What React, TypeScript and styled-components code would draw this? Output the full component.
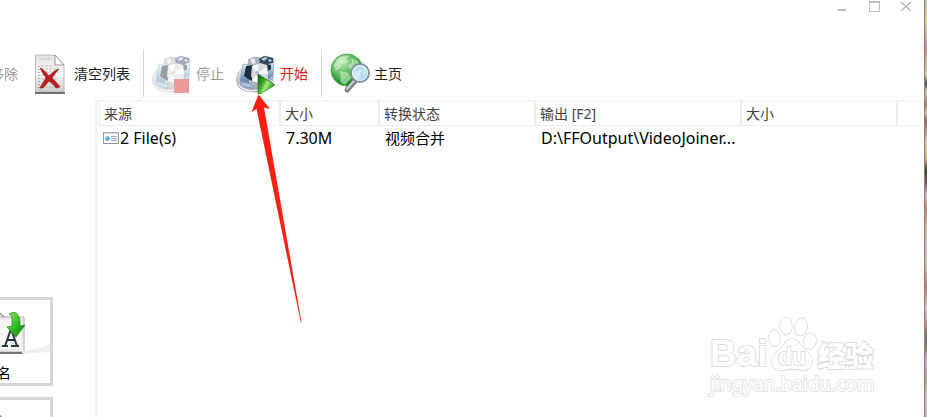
import React from "react";
import styled, { createGlobalStyle } from "styled-components";

const GlobalStyle = createGlobalStyle`
  * { box-sizing: border-box; }
  body {
    margin: 0;
    background: #fff;
    color: #000;
    font-family: "Noto Sans", "Noto Sans CJK SC", sans-serif;
    font-size: 14px;
    line-height: 20px;
  }
  button { font: inherit; background: none; border: 0; padding: 0; color: inherit; }
  svg { display: block; flex: none; }
`;

const Desktop = styled.div`
  position: relative;
  display: flex;
  height: 100vh;
  overflow: hidden;
`;

const AppWindow = styled.main`
  flex: 1;
  min-width: 0;
  display: flex;
  flex-direction: column;
  border-right: 1px solid #85858a;
`;

const WallpaperEdge = styled.div`
  width: 2px;
  background: linear-gradient(
    #c8c0b8 0, #ddd080 5%, #cdbcb4 7%, #c8898a 12%, #d8d0a0 18%, #44483f 20%,
    #d5c5c5 22%, #a07a60 25%, #d4c0c8 27%, #985f5a 29%, #d8cdb4 34%, #d0b070 38%,
    #303c30 41%, #8f5c58 44%, #d8b8c8 47%, #c98070 50%, #d0b090 54%, #cdb4c0 58%,
    #cdbfb8 63%, #c07870 69%, #d6c3c4 74%, #cf8880 78%, #7d7868 80%, #80786c 83%,
    #d4a8c4 86%, #aaa596 91%, #d0b8c0 95%, #c8b0b4 100%
  );
`;

const TitleBar = styled.header`
  display: flex;
  justify-content: flex-end;
  gap: 11px;
  height: 50px;
  padding-right: 8px;
`;

const WindowButton = styled.button`
  width: 21px;
  height: 14px;
  display: flex;
  justify-content: center;
`;

const Toolbar = styled.nav`
  display: flex;
  height: 50px;
  align-items: flex-start;
`;

const Divider = styled.span`
  width: 1px;
  height: 47px;
  background: #d2d2d2;
`;

const ToolButton = styled.button<{ $tone?: "muted" | "active"; $gap?: number; $pad?: string }>`
  display: flex;
  align-items: center;
  height: 48px;
  gap: ${(p) => p.$gap ?? 4}px;
  padding: ${(p) => p.$pad ?? "0"};
  white-space: nowrap;
  color: ${(p) => (p.$tone === "muted" ? "#999" : p.$tone === "active" ? "#cf1d10" : "#222")};
`;

const ClippedTool = styled.div`
  width: 18px;
  display: flex;
  justify-content: flex-end;
  overflow: hidden;
`;

const Body = styled.div`
  flex: 1;
  min-height: 0;
  display: flex;
`;

const Sidebar = styled.aside`
  width: 98px;
  flex: none;
  display: flex;
  flex-direction: column;
  align-items: flex-end;
  gap: 11px;
  padding: 197px 42px 0 0;
  overflow: hidden;
  border-right: 3px solid #f4f4f4;
`;

const Tile = styled.button`
  position: relative;
  flex: none;
  display: flex;
  flex-direction: column;
  align-items: center;
  width: 126px;
  height: 89px;
  padding-top: 9px;
  border: 3px solid #d6d6d6;
  background: #fff;
`;

const Shine = styled.svg`
  position: absolute;
  right: 0;
  top: 42px;
`;

const TileLabel = styled.span`
  margin-top: 6px;
`;

const FilePane = styled.section`
  flex: 1;
  min-width: 0;
  padding: 0 2px 0 1px;
`;

const FileTable = styled.table`
  width: 100%;
  table-layout: fixed;
  border-collapse: separate;
  border-spacing: 0;
`;

const HeadCell = styled.th<{ $width?: number }>`
  width: ${(p) => (p.$width ? `${p.$width}px` : "auto")};
  height: 26px;
  padding: 2px 0 0 4px;
  text-align: left;
  font-weight: 400;
  color: #444;
  white-space: nowrap;
  border: solid #ededed;
  border-width: 1px ${(p) => (p.$width ? 2 : 0)}px 1px 0;
  &:first-child { border-left-width: 1px; }
`;

const Cell = styled.td<{ $cjk?: boolean }>`
  height: 24px;
  padding: 0 0 0 5px;
  font-size: ${(p) => (p.$cjk ? 15 : 16)}px;
  white-space: nowrap;
  &:first-child { padding-left: 4px; }
`;

const FileName = styled.span`
  display: flex;
  align-items: center;
  gap: 1px;
`;

const PointerArrow = styled.svg`
  position: absolute;
  left: 250px;
  top: 94px;
  pointer-events: none;
`;

const Watermark = styled.div`
  position: absolute;
  right: 51px;
  bottom: 21px;
  width: 166px;
  color: #fff;
  -webkit-text-stroke: 2px #dcdcdc;
  paint-order: stroke fill;
  pointer-events: none;
`;

const WatermarkBrand = styled.div`
  display: flex;
  align-items: flex-end;
  height: 56px;
  font: 700 37px/36px "Liberation Sans", sans-serif;
`;

const WatermarkName = styled.span`
  font: 900 28px/34px "Noto Sans CJK SC", sans-serif;
`;

const WatermarkUrl = styled.div`
  font: 400 19px/24px "Noto Sans", sans-serif;
  white-space: nowrap;
  -webkit-text-stroke-color: #e4e4e4;
`;

const ClearIcon = () => (
  <svg width="32" height="42" viewBox="0 0 32 42">
    <defs>
      <linearGradient id="sheet" x1="0" y1="0" x2="0" y2="1">
        <stop offset="0" stopColor="#e4e4e4" />
        <stop offset="0.5" stopColor="#f7f7f7" />
        <stop offset="1" stopColor="#cccccc" />
      </linearGradient>
    </defs>
    <path d="M1.500 2h19l9.500 10v27H1.500z" fill="url(#sheet)" stroke="#b8b8b8" />
    <path d="M1 40h30" stroke="#707070" strokeWidth="2" />
    <path d="M21 2v10h9z" fill="#fff" stroke="#999" />
    <path d="M5 6h12M7 13h11M7 16h16M7 19h18M7 22h15M7 26h17M7 30h15M7 34h17" stroke="#bcbcbc" strokeDasharray="3 1" />
    <path d="M5 13v22" stroke="#777" strokeDasharray="1 2" />
    <path d="M6 15c3 1 6 4 9 8 3-3 6-6 10-7-3 3-5 6-7 9 3 3 5 5 8 9l-4 1c-2-3-4-5-7-7-2 2-4 5-6 7H6c2-4 4-7 6-10-2-3-4-6-6-10z" fill="#c01c1e" stroke="#8f1618" strokeWidth="0.6" />
  </svg>
);

const Camera = ({ faded, children }: { faded?: boolean; children: React.ReactNode }) => (
  <svg width="40" height="40" viewBox="0 0 40 40" opacity={faded ? 0.45 : 1}>
    <defs>
      <linearGradient id="base" x1="0" y1="0" x2="0" y2="1">
        <stop offset="0" stopColor="#e3e5ea" />
        <stop offset="0.6" stopColor="#c3c6cd" />
        <stop offset="1" stopColor="#8e929a" />
      </linearGradient>
      <linearGradient id="metal" x1="0" y1="0" x2="1" y2="1">
        <stop offset="0" stopColor="#9fa5ad" />
        <stop offset="0.5" stopColor="#dfe2e6" />
        <stop offset="1" stopColor="#a2a9b3" />
      </linearGradient>
      <linearGradient id="glass" x1="0" y1="0" x2="0" y2="1">
        <stop offset="0" stopColor="#dcecf8" />
        <stop offset="0.5" stopColor="#91b6d8" />
        <stop offset="1" stopColor="#577fa9" />
      </linearGradient>
      <linearGradient id="play" x1="0" y1="0" x2="1" y2="0.600">
        <stop offset="0" stopColor="#04600a" />
        <stop offset="0.4" stopColor="#3fa82c" />
        <stop offset="0.6" stopColor="#a5ec7b" />
        <stop offset="1" stopColor="#0a8a10" />
      </linearGradient>
    </defs>
    <path d="M0.500 25C1 17 7 12 18 12s19 6 19 14-8 12-19 12S0 34 0.500 25z" fill="url(#base)" stroke="#a9adb5" strokeWidth="0.6" />
    <path d="M3 31c5 6 13 7 22 4" fill="none" stroke="#f4f5f8" strokeWidth="1.500" />
    <path d="M13 6l5-3 7 1 5-2 8 3-1 19-10 7-13-3-7-1z" fill="url(#metal)" stroke="#7d8792" strokeWidth="0.6" />
    <path d="M12 5l5-2 6 1 1 6-10 1z" fill="#a9b0b9" />
    <path d="M14 5l4-1 2 5-4 1z" fill="#e4e9ef" />
    <path d="M23 5l5-3 9 2v5l-6 2-7-2z" fill="#35485e" />
    <path d="M25 5l4-2 3 1-4 3zM33 5l3 1-1 2-3-1z" fill="#b2cce5" />
    <path d="M7 10l7 1-1 18-9-2z" fill="url(#glass)" stroke="#8298ad" strokeWidth="0.6" />
    <path d="M10 12l7-1-1 16-4-2-4-3z" fill="#1f2c3a" />
    <path d="M16 12l6-2 9 2 2 8-5 9-10-1-3-6z" fill="#d5d8dd" />
    <path d="M21 20l-5-8 7-2zM21 20l9-7 2 7zM21 20l-5 6 8 3z" fill="#f9fafb" />
    <circle cx="21" cy="19" r="2.500" fill="#b9bec6" stroke="#fff" strokeWidth="0.6" />
    <path d="M32 10l5-1v12l-5 5z" fill="url(#glass)" />
    <path d="M31 10l4 1v4l-3 2z" fill="#24364a" />
    <path d="M4 28l12 2v4l-11-2z" fill="#a8c5df" stroke="#6889a9" strokeWidth="0.6" />
    {children}
  </svg>
);

const GlobeIcon = () => (
  <svg width="41" height="42" viewBox="0 0 41 42">
    <defs>
      <radialGradient id="globe" cx="0.35" cy="0.25" r="0.8">
        <stop offset="0" stopColor="#c2eebb" />
        <stop offset="0.45" stopColor="#5dba60" />
        <stop offset="1" stopColor="#0a7a1b" />
      </radialGradient>
      <linearGradient id="lens" x1="0" y1="0" x2="1" y2="1">
        <stop offset="0" stopColor="#a8d8f2" />
        <stop offset="0.5" stopColor="#d9effa" />
        <stop offset="1" stopColor="#91c7e8" />
      </linearGradient>
    </defs>
    <circle cx="17" cy="17" r="16" fill="url(#globe)" stroke="#4ca952" />
    <path d="M4 12c3-7 9-10 15-9l-3 3 2 3-7 2-1 5-5 2zM21 5l7 3 3 7-4-1-2 3-5-1-2-4 4-2zM10 18l8 2 3 5-6 7-4-3z" fill="#dcf6d3" opacity="0.55" />
    <path d="M2 17c8 4 22 3 30-1M10 3c-4 8-3 20 3 29M25 3c4 8 3 18-3 28" fill="none" stroke="#c6edbf" strokeWidth="0.6" opacity="0.4" />
    <path d="M25 28l-8 9" stroke="#777d83" strokeWidth="5" strokeLinecap="round" />
    <path d="M24 28l-7 8" stroke="#c8cdd1" strokeWidth="2" strokeLinecap="round" />
    <circle cx="30" cy="20" r="9" fill="url(#lens)" stroke="#83919b" strokeWidth="2" />
    <circle cx="30" cy="20" r="7.5" fill="none" stroke="#e4f4fc" />
    <path d="M26 18l4-3 4 2-3 3 1 5" fill="none" stroke="#86b9dc" strokeWidth="1.5" opacity="0.4" />
  </svg>
);

const RenameIcon = () => (
  <svg width="72" height="48" viewBox="-3 0 72 48">
    <defs>
      <linearGradient id="down" x1="0" y1="0" x2="1" y2="1">
        <stop offset="0" stopColor="#a0ed69" />
        <stop offset="0.5" stopColor="#35bc20" />
        <stop offset="1" stopColor="#087b0c" />
      </linearGradient>
    </defs>
    <path d="M22 44V11l17-9 10 8v30z" fill="#f3f3f3" stroke="#bbb" />
    <path d="M43 4l6 5M38 9h24" stroke="#777" />
    <path d="M34 8h33v35H34z" fill="#f6f6f8" stroke="#aaa" />
    <path d="M34 44h34" stroke="#777" strokeWidth="2" />
    <path d="M36 10h29v31H36z" fill="none" stroke="#ddd" />
    <path d="M45 37h6m3 0h8M48 37l6-17 6 17M50 31h8" stroke="#26343f" strokeWidth="2" fill="none" />
    <path d="M54 4q7-3 9 8v5l5-1-9 12-9-10 5-1V9q0-3-3-4z" fill="url(#down)" stroke="#168412" strokeWidth="0.7" />
  </svg>
);

const SearchTileIcon = () => (
  <svg width="72" height="48" viewBox="0 0 72 48">
    <circle cx="38" cy="16" r="11" fill="#e7e7e7" stroke="#999" strokeWidth="4" />
  </svg>
);

const FileIcon = () => (
  <svg width="16" height="14" viewBox="0 0 16 14" aria-hidden="true">
    <path d="M0.5 1.5h15v11H0.5z" fill="#f4f8fb" stroke="#8e969d" />
    <path d="M1 2h14" stroke="#b4bdc5" />
    <circle cx="4.5" cy="7.5" r="2.3" fill="#459bc7" />
    <circle cx="4" cy="7" r="1" fill="#91d1e8" />
    <path d="M8 5.5h6M8 7.5h6M8 9.5h6" stroke="#9fadc4" />
  </svg>
);

const Paw = () => (
  <svg width="50" height="56" viewBox="2 0 50 56" fill="#fff" stroke="#d8d8d8" strokeWidth="1.5">
    <ellipse cx="8.500" cy="22" rx="5.500" ry="8" transform="rotate(-8 8.500 22)" />
    <ellipse cx="20" cy="10" rx="6" ry="8.5" />
    <ellipse cx="35" cy="11" rx="6" ry="8.5" transform="rotate(12 35 11)" />
    <ellipse cx="44" cy="25" rx="6" ry="8" transform="rotate(10 44 25)" />
    <path d="M26 23c6 0 8 6 13 11 5 4 8 8 7 13-1 6-7 8-12 7-6-2-11-1-16 0-6 1-11-1-12-7-1-5 3-9 7-13 5-5 7-11 13-11z" />
    <text x="26" y="49" textAnchor="middle" fontFamily="Liberation Sans" fontSize="23" fontWeight="700">du</text>
  </svg>
);

const columns: { title: string; width?: number }[] = [
  { title: "来源", width: 182 },
  { title: "大小", width: 99 },
  { title: "转换状态", width: 156 },
  { title: "输出 [F2]", width: 206 },
  { title: "大小", width: 156 },
  { title: "" },
];

export default function App() {
  return (
    <Desktop>
      <GlobalStyle />
      <AppWindow>
        <TitleBar>
          <WindowButton aria-label="最小化">
            <svg width="12" height="14"><path d="M2 10h8" stroke="#c0c0c0" strokeWidth="2" /></svg>
          </WindowButton>
          <WindowButton aria-label="最大化">
            <svg width="12" height="14"><path d="M1.500 2v9.500h10V2" fill="none" stroke="#c0c0c0" /><path d="M1 2h11" stroke="#c0c0c0" strokeWidth="2" /></svg>
          </WindowButton>
          <WindowButton aria-label="关闭">
            <svg width="12" height="14"><path d="M1 2l10 9M11 2L1 11" stroke="#b8b8b8" strokeWidth="1.5" /></svg>
          </WindowButton>
        </TitleBar>
        <Toolbar>
          <ClippedTool>
            <ToolButton $tone="muted" disabled>移除</ToolButton>
          </ClippedTool>
          <ToolButton $gap={8} $pad="0 13px 0 16px"><ClearIcon />清空列表</ToolButton>
          <Divider />
          <ToolButton $tone="muted" $pad="0 12px 0 8px" disabled>
            <Camera faded><path d="M22 25h15v14H22z" fill="#d52222" /></Camera>停止
          </ToolButton>
          <ToolButton $tone="active" $pad="0 13px 0 0">
            <Camera><path d="M22 20l17 11-17 10z" fill="url(#play)" stroke="#138014" strokeWidth="0.7" /></Camera>开始
          </ToolButton>
          <Divider />
          <ToolButton $gap={3} $pad="0 0 0 8px"><GlobeIcon />主页</ToolButton>
        </Toolbar>
        <Body>
          <Sidebar>
            <Tile>
              <Shine width="28" height="14" viewBox="0 0 28 14"><path d="M0 9C10 9 20 5 28 2v8L0 12z" fill="#f0f0f0" /></Shine>
              <RenameIcon />
              <TileLabel>重命名</TileLabel>
            </Tile>
            <Tile aria-label="搜索"><SearchTileIcon /></Tile>
          </Sidebar>
          <FilePane>
            <FileTable>
              <thead>
                <tr>{columns.map((c, i) => <HeadCell key={i} $width={c.width}>{c.title}</HeadCell>)}</tr>
              </thead>
              <tbody>
                <tr>
                  <Cell><FileName><FileIcon />2 File(s)</FileName></Cell>
                  <Cell>7.30M</Cell>
                  <Cell $cjk>视频合并</Cell>
                  <Cell>D:\FFOutput\VideoJoiner...</Cell>
                  <Cell />
                  <Cell />
                </tr>
              </tbody>
            </FileTable>
          </FilePane>
        </Body>
      </AppWindow>
      <WallpaperEdge />
      <PointerArrow width="54" height="230" viewBox="0 0 54 230" aria-hidden="true">
        <path d="M8.5 0.5L20 15l-6-1.5L51.5 228.5 50.8 228.5 6.5 15 1.500 18z" fill="#ff1f12" />
      </PointerArrow>
      <Watermark>
        <WatermarkBrand>Bai<Paw /><WatermarkName>经验</WatermarkName></WatermarkBrand>
        <WatermarkUrl>jingyan.baidu.com</WatermarkUrl>
      </Watermark>
    </Desktop>
  );
}
